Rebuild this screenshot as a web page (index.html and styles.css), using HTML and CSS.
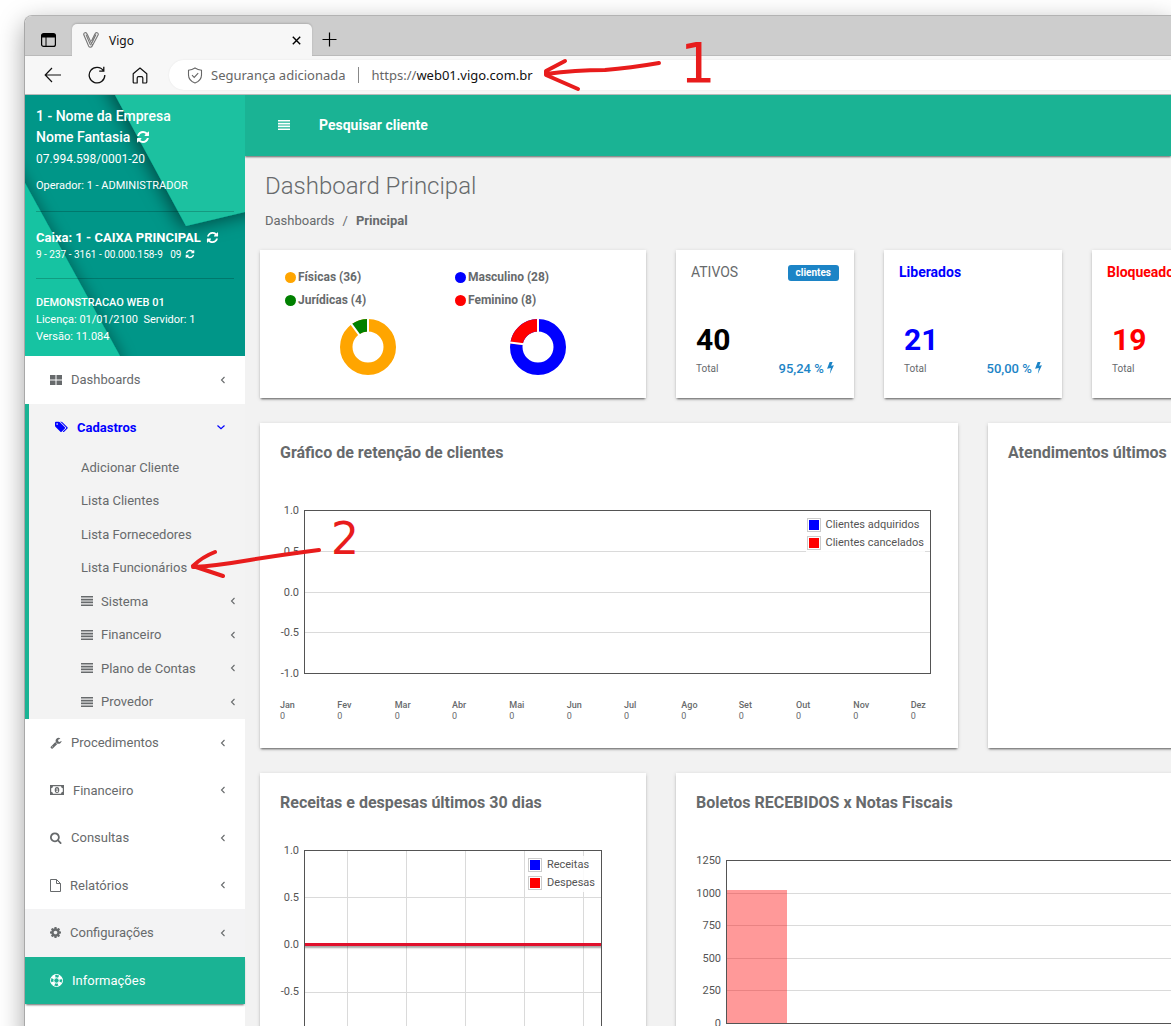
FILE: index.html
```
<!DOCTYPE html>
<html lang="pt-BR">
<head>
    <meta charset="UTF-8">
    <meta name="viewport" content="width=device-width, initial-scale=1.0">
    <title>Vigo</title>
    <link rel="stylesheet" href="styles.css">
</head>
<body>
    <!-- Ícones reutilizados -->
    <svg class="sprite" aria-hidden="true">
        <symbol id="i-refresh" viewBox="0 0 1792 1792"><path d="M1639 1056q0 5-1 7-64 268-268 434.500t-478 166.500q-146 0-282.500-55t-243.500-157l-129 129q-19 19-45 19t-45-19-19-45v-448q0-26 19-45t45-19h448q26 0 45 19t19 45-19 45l-137 137q71 66 161 102t187 36q134 0 250-65t186-179q11-17 53-117 8-23 30-23h192q13 0 22.500 9.500t9.500 22.500zm25-800v448q0 26-19 45t-45 19h-448q-26 0-45-19t-19-45 19-45l138-138q-148-137-349-137-134 0-250 65t-186 179q-11 17-53 117-8 23-30 23h-199q-13 0-22.500-9.500t-9.500-22.500v-7q65-268 270-434.500t480-166.500q146 0 284 55.500t245 156.500l130-129q19-19 45-19t45 19 19 45z"/></symbol>
        <symbol id="i-left" viewBox="0 0 8 10"><path d="M5.500 2L2.500 5l3 3" fill="none" stroke="currentColor" stroke-width="1.100"/></symbol>
        <symbol id="i-down" viewBox="0 0 8 10"><path d="M.5 3.500L4 6.800l3.500-3.300" fill="none" stroke="currentColor" stroke-width="1.200"/></symbol>
        <symbol id="i-bars" viewBox="0 0 12 10"><path d="M0 0h12v1.600H0zM0 2.800h12v1.600H0zM0 5.600h12v1.600H0zM0 8.400h12v1.600H0z"/></symbol>
        <symbol id="i-bolt" viewBox="0 0 8 14"><path d="M3 0h3.500L4.800 4.500 8 3.900 3.200 14l1.200-7L0 8z"/></symbol>
    </svg>

    <div class="window">
        <div class="tab-strip">
            <button class="chrome-button strip-button" aria-label="Guias verticais">
                <svg width="15" height="14" viewBox="0 0 15 14"><rect x=".6" y=".6" width="13.800" height="12.800" rx="2" fill="none" stroke="#000" stroke-width="1.200"/><path d="M1 1h13v3.500H1z"/><path d="M5 4v9" stroke="#000"/></svg>
            </button>
            <div class="tab">
                <svg width="16" height="16" viewBox="0 0 16 16" fill="none" stroke="#777" stroke-width="1.100"><path d="M.8 2.800C.3.600 3.200-.2 4 1.800l5.200 11c.4 2.600-2.600 3.200-3.600 1.200zM3 2.600l4.600 10.700M15.200 2.800c.5-2.200-2.300-3-3.200-1L8.500 9M15.200 2.800L9.200 14c-.6 1-1.500 1.400-2.400 1.200M13 2.600L9 10.800"/></svg>
                <span class="tab-title">Vigo</span>
                <button class="chrome-button" aria-label="Fechar guia">
                    <svg width="9" height="9" viewBox="0 0 9 9"><path d="M.8.800l7.400 7.400M8.200.800L.8 8.200" stroke="#000" stroke-width="1.400"/></svg>
                </button>
            </div>
            <button class="chrome-button new-tab" aria-label="Nova guia">
                <svg width="15" height="15" viewBox="0 0 15 15"><path d="M7.500.500v14M.5 7.500h14" stroke="#000" stroke-width="1.200"/></svg>
            </button>
        </div>

        <div class="toolbar">
            <button class="chrome-button" aria-label="Voltar">
                <svg width="18" height="16" viewBox="0 0 18 16"><path d="M17 8H1.500M8 1L1.200 8 8 15" fill="none" stroke="#111" stroke-width="1.200"/></svg>
            </button>
            <button class="chrome-button" aria-label="Atualizar">
                <svg width="18" height="18" viewBox="0 0 18 18"><path d="M15.500 4.800A7.800 7.800 0 1 0 16.800 9M15.800.800v4.400h-4.600" fill="none" stroke="#111" stroke-width="1.300"/></svg>
            </button>
            <button class="chrome-button" aria-label="Início">
                <svg width="16" height="17" viewBox="0 0 16 17"><path d="M1.200 6.800L8 1l6.800 5.800v8.200q0 1-1 1h-3v-5q0-1.300-1.300-1.300h-3Q5.200 9.700 5.200 11v5h-3q-1 0-1-1z" fill="none" stroke="#111" stroke-width="1.200" stroke-linejoin="round"/></svg>
            </button>
            <div class="address-bar">
                <svg width="16" height="17" viewBox="0 0 16 17" fill="none" stroke="#666" stroke-width="1.100"><path d="M8 1q3 2 6.500 2.200V8q0 5.500-6.500 8Q1.500 13.500 1.500 8V3.200Q5 3 8 1z"/><path d="M5 8.200l2.200 2.200 4-4.200"/></svg>
                <span class="security">Segurança adicionada</span>
                <span class="separator"></span>
                <label class="scheme" for="url">https://</label>
                <input class="url" id="url" type="text" value="web01.vigo.com.br">
            </div>
        </div>

        <div class="page">
            <nav class="sidebar">
                <div class="profile">
                    <svg class="profile-bg" viewBox="0 0 220 261" preserveAspectRatio="none" aria-hidden="true">
                        <defs>
                            <filter id="fold" x="-30%" y="-30%" width="160%" height="160%">
                                <feDropShadow dx="-3" dy="3" stdDeviation="9" flood-opacity=".5"/>
                            </filter>
                            <filter id="fold-soft" x="-50%" y="-30%" width="200%" height="160%">
                                <feDropShadow dx="3" dy="0" stdDeviation="7" flood-opacity=".3"/>
                            </filter>
                        </defs>
                        <path d="M0 88l95 173v40H-20V52z" fill="#14c3a2" filter="url(#fold-soft)"/>
                        <path d="M90 0l71 131 80-19V-20H79z" fill="#1ac1a0" filter="url(#fold)"/>
                    </svg>
                    <div class="profile-info">
                        <strong class="company">1 - Nome da Empresa<br>Nome Fantasia <svg class="refresh refresh-lg"><use href="#i-refresh"/></svg></strong>
                        <span class="cnpj">07.994.598/0001-20</span>
                        <span class="operator">Operador: 1 - ADMINISTRADOR</span>
                        <hr>
                        <strong class="cashier">Caixa: 1 - CAIXA PRINCIPAL <svg class="refresh"><use href="#i-refresh"/></svg></strong>
                        <span class="account">9 - 237 - 3161 - 00.000.158-9 &nbsp; 09 <svg class="refresh refresh-sm"><use href="#i-refresh"/></svg></span>
                        <hr>
                        <span class="license"><b>DEMONSTRACAO WEB 01</b><br>Licença: 01/01/2100&nbsp; Servidor: 1<br>Versão: 11.084</span>
                    </div>
                </div>

                <ul class="menu">
                    <li class="menu-item">
                        <a href="#">
                            <svg width="12" height="12" viewBox="0 0 12 12"><path d="M0 1h5.500v4.500H0zM6.500 1H12v4.500H6.500zM0 6.500h5.500V11H0zM6.500 6.500H12V11H6.500z"/></svg>
                            <span>Dashboards</span><svg class="arrow"><use href="#i-left"/></svg>
                        </a>
                    </li>
                    <li class="menu-item active">
                        <a href="#">
                            <svg width="14" height="12" viewBox="0 0 2048 1792"><path d="M576 448q0-53-37.500-90.500t-90.500-37.500-90.500 37.500-37.500 90.500 37.500 90.500 90.500 37.500 90.500-37.500 37.500-90.500zm1067 576q0 53-37 90l-491 492q-39 37-91 37-53 0-90-37l-715-716q-38-37-64.500-101t-26.500-117v-416q0-52 38-90t90-38h416q53 0 117 26.500t102 64.500l715 714q37 39 37 91zm384 0q0 53-37 90l-491 492q-39 37-91 37-36 0-59-14t-53-45l470-470q37-37 37-90 0-52-37-91l-715-714q-38-38-102-64.500t-117-26.500h224q53 0 117 26.500t102 64.500l715 714q37 39 37 91z"/></svg>
                            <span>Cadastros</span><svg class="arrow"><use href="#i-down"/></svg>
                        </a>
                        <ul class="submenu">
                            <li><a href="#">Adicionar Cliente</a></li>
                            <li><a href="#">Lista Clientes</a></li>
                            <li><a href="#">Lista Fornecedores</a></li>
                            <li><a href="#">Lista Funcionários</a></li>
                            <li><a href="#"><svg class="bars"><use href="#i-bars"/></svg>Sistema<svg class="arrow"><use href="#i-left"/></svg></a></li>
                            <li><a href="#"><svg class="bars"><use href="#i-bars"/></svg>Financeiro<svg class="arrow"><use href="#i-left"/></svg></a></li>
                            <li><a href="#"><svg class="bars"><use href="#i-bars"/></svg>Plano de Contas<svg class="arrow"><use href="#i-left"/></svg></a></li>
                            <li><a href="#"><svg class="bars"><use href="#i-bars"/></svg>Provedor<svg class="arrow"><use href="#i-left"/></svg></a></li>
                        </ul>
                    </li>
                    <li class="menu-item">
                        <a href="#">
                            <svg width="12" height="12" viewBox="0 0 1792 1792"><path d="M448 1472q0-26-19-45t-45-19-45 19-19 45 19 45 45 19 45-19 19-45zm644-420l-682 682q-37 37-90 37-52 0-91-37l-106-108q-38-36-38-90 0-53 38-91l681-681q39 98 114.500 173.500t173.500 114.500zm634-435q0 39-23 106-47 134-164.500 217.500t-258.500 83.500q-185 0-316.500-131.500t-131.500-316.500 131.500-316.500 316.500-131.500q58 0 121.500 16.500t107.500 46.500q16 11 16 28t-16 28l-293 169v224l193 107q5-3 79-48.500t135.500-81 70.500-35.500q15 0 23.500 10t8.500 25z"/></svg>
                            <span>Procedimentos</span><svg class="arrow"><use href="#i-left"/></svg>
                        </a>
                    </li>
                    <li class="menu-item">
                        <a href="#">
                            <svg width="14" height="10" viewBox="0 0 14 10"><path fill-rule="evenodd" d="M0 0h14v10H0zM3 1.200Q2.800 3 1.200 3.200v3.600Q2.800 7 3 8.800h8q.2-1.800 1.800-2V3.200Q11.200 3 11 1.200zM7 2a2.300 3 0 1 1 0 6 2.300 3 0 1 1 0-6zm-.8 1.400v.8h.5v2h-.6V7h2v-.8h-.5V3.400z"/></svg>
                            <span>Financeiro</span><svg class="arrow"><use href="#i-left"/></svg>
                        </a>
                    </li>
                    <li class="menu-item">
                        <a href="#">
                            <svg width="12" height="12" viewBox="64 64 1728 1728"><path d="M1216 832q0-185-131.500-316.500t-316.500-131.500-316.500 131.500-131.500 316.500 131.500 316.500 316.500 131.500 316.500-131.500 131.500-316.500zm512 832q0 52-38 90t-90 38q-54 0-90-38l-343-342q-179 124-399 124-143 0-273.500-55.500t-225-150-150-225-55.500-273.500 55.500-273.500 150-225 225-150 273.500-55.500 273.500 55.500 225 150 150 225 55.500 273.500q0 220-124 399l343 343q37 37 37 90z"/></svg>
                            <span>Consultas</span><svg class="arrow"><use href="#i-left"/></svg>
                        </a>
                    </li>
                    <li class="menu-item">
                        <a href="#">
                            <svg width="11" height="13" viewBox="0 0 11 13"><path d="M.5.500h6l4 4v8H.5zM6.500.500v4h4" fill="none" stroke="currentColor"/></svg>
                            <span>Relatórios</span><svg class="arrow"><use href="#i-left"/></svg>
                        </a>
                    </li>
                    <li class="menu-item special">
                        <a href="#">
                            <svg width="11" height="11" viewBox="128 128 1536 1536"><path d="M1152 896q0-106-75-181t-181-75-181 75-75 181 75 181 181 75 181-75 75-181zm512-109v222q0 12-8 23t-20 13l-185 28q-19 54-39 91 35 50 107 138 10 12 10 25t-9 23q-27 37-99 108t-94 71q-12 0-26-9l-138-108q-44 23-91 38-16 136-29 186-7 28-36 28h-222q-14 0-24.500-8.500t-11.500-21.500l-28-184q-49-16-90-37l-141 107q-10 9-25 9-14 0-25-11-126-114-165-168-7-10-7-23 0-12 8-23 15-21 51-66.500t54-70.500q-27-50-41-99l-183-27q-13-2-21-12.500t-8-23.500v-222q0-12 8-23t19-13l186-28q14-46 39-92-40-57-107-138-10-12-10-24 0-10 9-23 26-36 98.500-107.500t94.500-71.500q13 0 26 10l138 107q44-23 91-38 16-136 29-186 7-28 36-28h222q14 0 24.500 8.500t11.500 21.500l28 184q49 16 90 37l142-107q9-9 24-9 13 0 25 10 129 119 165 170 7 8 7 22 0 12-8 23-15 21-51 66.500t-54 70.500q26 50 41 98l183 28q13 2 21 12.500t8 23.500z"/></svg>
                            <span>Configurações</span><svg class="arrow"><use href="#i-left"/></svg>
                        </a>
                    </li>
                    <li class="menu-item info">
                        <a href="#">
                            <svg width="13" height="13" viewBox="0 0 13 13" fill="none" stroke="currentColor"><circle cx="6.500" cy="6.500" r="6"/><circle cx="6.500" cy="6.500" r="2.700"/><circle cx="6.500" cy="6.500" r="4.400" stroke-width="3" stroke-dasharray="3.450 3.450" stroke-dashoffset="-1.700"/></svg>
                            <span>Informações</span>
                        </a>
                    </li>
                </ul>
            </nav>

            <main class="content">
                <header class="topbar">
                    <button class="menu-toggle" aria-label="Alternar menu"><svg class="bars"><use href="#i-bars"/></svg></button>
                    <input class="search" type="text" placeholder="Pesquisar cliente" aria-label="Pesquisar cliente">
                </header>

                <div class="heading">
                    <h1>Dashboard Principal</h1>
                    <div class="breadcrumb"><a href="#">Dashboards</a><span>/</span><strong>Principal</strong></div>
                </div>

                <div class="cards">
                    <section class="card span-4 people">
                        <div>
                            <p class="dot-row"><i class="dot orange"></i>Físicas (36)</p>
                            <p class="dot-row"><i class="dot green"></i>Jurídicas (4)</p>
                            <svg class="donut" viewBox="-28 -28 56 56" fill="none" stroke-width="12.500">
                                <circle r="21.750" stroke="orange"/>
                                <circle r="21.750" stroke="green" pathLength="100" stroke-dasharray="10 90" transform="rotate(-126)"/>
                                <path d="M0-14v-15M-8.200-11.300l-9-12.400" stroke="#fff" stroke-width="2"/>
                            </svg>
                        </div>
                        <div>
                            <p class="dot-row"><i class="dot blue"></i>Masculino (28)</p>
                            <p class="dot-row"><i class="dot red"></i>Feminino (8)</p>
                            <svg class="donut" viewBox="-28 -28 56 56" fill="none" stroke-width="12.500">
                                <circle r="21.750" stroke="blue"/>
                                <circle r="21.750" stroke="red" pathLength="100" stroke-dasharray="23 77" transform="rotate(-172.800)"/>
                                <path d="M0-14v-15M-14-2.800l-15-1.900" stroke="#fff" stroke-width="2"/>
                            </svg>
                        </div>
                    </section>

                    <section class="card span-2 stat">
                        <div class="stat-head"><h2>ATIVOS</h2><span class="badge">clientes</span></div>
                        <div class="stat-body">
                            <strong class="number">40</strong>
                            <div class="stat-foot"><small>Total</small><span class="percent">95,24 % <svg class="bolt"><use href="#i-bolt"/></svg></span></div>
                        </div>
                    </section>
                    <section class="card span-2 stat stat-blue">
                        <div class="stat-head"><h2>Liberados</h2></div>
                        <div class="stat-body">
                            <strong class="number">21</strong>
                            <div class="stat-foot"><small>Total</small><span class="percent">50,00 % <svg class="bolt"><use href="#i-bolt"/></svg></span></div>
                        </div>
                    </section>
                    <section class="card span-2 stat stat-red">
                        <div class="stat-head"><h2>Bloqueados</h2></div>
                        <div class="stat-body">
                            <strong class="number">19</strong>
                            <div class="stat-foot"><small>Total</small></div>
                        </div>
                    </section>
                </div>

                <div class="cards">
                    <section class="card span-7 panel">
                        <h2>Gráfico de retenção de clientes</h2>
                        <div class="chart">
                            <div class="axis"><span>1.0</span><span>0.5</span><span>0.0</span><span>-0.5</span><span>-1.0</span></div>
                            <div class="plot">
                                <i></i><i></i><i></i><i></i>
                                <div class="legend">
                                    <span><b class="blue"></b>Clientes adquiridos</span>
                                    <span><b class="red"></b>Clientes cancelados</span>
                                </div>
                            </div>
                        </div>
                        <div class="months">
                            <span><b>Jan</b>0</span><span><b>Fev</b>0</span><span><b>Mar</b>0</span><span><b>Abr</b>0</span><span><b>Mai</b>0</span><span><b>Jun</b>0</span><span><b>Jul</b>0</span><span><b>Ago</b>0</span><span><b>Set</b>0</span><span><b>Out</b>0</span><span><b>Nov</b>0</span><span><b>Dez</b>0</span>
                        </div>
                    </section>
                    <section class="card span-5 panel">
                        <h2>Atendimentos últimos</h2>
                    </section>
                </div>

                <div class="cards">
                    <section class="card span-4 panel">
                        <h2>Receitas e despesas últimos 30 dias</h2>
                        <div class="chart chart-tall">
                            <div class="axis"><span>1.0</span><span>0.5</span><span>0.0</span><span>-0.5</span><span>-1.0</span></div>
                            <div class="plot plot-days">
                                <i></i><i></i><i class="zero-line"></i><i></i>
                                <div class="legend">
                                    <span><b class="blue"></b>Receitas</span>
                                    <span><b class="red"></b>Despesas</span>
                                </div>
                            </div>
                        </div>
                    </section>
                    <section class="card span-8 panel">
                        <h2>Boletos RECEBIDOS x Notas Fiscais</h2>
                        <div class="chart chart-wide">
                            <div class="axis"><span>1250</span><span>1000</span><span>750</span><span>500</span><span>250</span><span>0</span></div>
                            <div class="plot">
                                <i></i><i></i><i></i><i></i><i></i>
                                <div class="bar" style="height: 82%"></div>
                            </div>
                        </div>
                    </section>
                </div>
            </main>
        </div>
    </div>

    <!-- Marcações do passo a passo -->
    <svg class="notes" width="760" height="620" viewBox="0 0 760 620">
        <path d="M659 63Q630 68 605 70Q575 70 546 74M565 61L546 71V75L578 89"/>
        <path d="M319 550Q280 555 250 560Q215 566 193 567M215 552Q202 557 193 566L223 576"/>
        <text class="note-1" x="680" y="82">1</text>
        <text class="note-2" x="331" y="554">2</text>
    </svg>
</body>
</html>
```
FILE: styles.css
```
/* Geral */
* {
    margin: 0;
    padding: 0;
    box-sizing: border-box;
}

body {
    height: 100vh;
    overflow: hidden;
    background: #fff;
    font-family: Roboto, sans-serif;
    font-size: 13px;
    color: #676a6c;
}

a {
    color: inherit;
    text-decoration: none;
}

ul {
    list-style: none;
}

svg {
    flex-shrink: 0;
}

svg:not([fill]) {
    fill: currentColor;
}

button {
    border: none;
    background: transparent;
    cursor: pointer;
}

input {
    border: none;
    outline: none;
    background: transparent;
    min-width: 0;
}

.sprite {
    position: absolute;
    width: 0;
    height: 0;
}

.blue { background: #00f; }
.red { background: #f00; }
.orange { background: orange; }
.green { background: green; }

/* Janela do navegador */
.window {
    display: flex;
    flex-direction: column;
    margin: 15px 0 0 24px;
    height: 100%;
    border-top: 1px solid #b3b3b3;
    border-left: 1px solid #a8a8a8;
    border-radius: 8px 0 0 0;
    overflow: hidden;
    box-shadow: 0 8px 26px rgba(0, 0, 0, 0.36);
    font-family: "Noto Sans", sans-serif;
}

.chrome-button {
    display: flex;
    align-items: center;
    justify-content: center;
}

.tab-strip {
    display: flex;
    align-items: flex-end;
    height: 40px;
    flex-shrink: 0;
    background: #cdcdcd;
    border-bottom: 1px solid #bababa;
}

.strip-button {
    width: 47px;
    height: 31px;
}

.tab {
    display: flex;
    align-items: center;
    width: 240px;
    height: 32px;
    margin-bottom: -1px;
    padding: 0 11px;
    gap: 10px;
    background: #f7f7f7;
    border-radius: 5px 5px 0 0;
    box-shadow: 0 -1px 2px rgba(0, 0, 0, 0.15);
    clip-path: inset(-4px -4px 0 -4px);
    font-size: 12px;
    color: #111;
}

.tab-title {
    flex: 1;
}

.new-tab {
    width: 35px;
    height: 32px;
}

.toolbar {
    display: flex;
    align-items: center;
    gap: 26px;
    height: 39px;
    flex-shrink: 0;
    padding-left: 19px;
    background: #f7f7f7;
    border-bottom: 1px solid #bababa;
}

.address-bar {
    display: flex;
    flex: 1;
    align-items: center;
    height: 30px;
    margin-left: -5px;
    padding-left: 18px;
    background: #fff;
    border-radius: 15px 0 0 15px;
    font-size: 13px;
    color: #666;
    box-shadow: 0 0 2px rgba(0, 0, 0, 0.08);
}

.security {
    margin-left: 8px;
}

.separator {
    width: 1px;
    height: 16px;
    margin: 0 13px 0 12px;
    background: #888;
}

.url {
    flex: 1;
    font: inherit;
    color: #111;
}

/* Página */
.page {
    display: flex;
    flex: 1;
    min-height: 0;
    background: #f2f2f2;
    font-family: Roboto, sans-serif;
}

.sidebar {
    width: 220px;
    flex-shrink: 0;
    background: #fff;
}

/* Dados da empresa */
.profile {
    position: relative;
    height: 261px;
    overflow: hidden;
    background: #009688;
    color: #fff;
}

.profile-bg {
    position: absolute;
    inset: 0;
    width: 100%;
    height: 100%;
}

.profile-info {
    position: relative;
    display: flex;
    flex-direction: column;
    padding: 11px;
}

.profile-info hr {
    border: none;
    border-top: 1px solid rgba(0, 0, 0, 0.2);
}

.company {
    font-size: 14px;
    line-height: 21px;
    font-weight: 500;
}

.cnpj {
    font-size: 12px;
    line-height: 22px;
}

.operator {
    margin: 6px 0 15px;
    font-size: 11px;
    line-height: 20px;
}

.cashier {
    margin-top: 17px;
    font-size: 13px;
    line-height: 18px;
}

.account {
    margin-bottom: 15px;
    font-size: 10px;
    line-height: 16px;
}

.license {
    margin-top: 15px;
    font-size: 11px;
    line-height: 17px;
}

.license b {
    font-weight: 500;
}

.refresh {
    width: 13px;
    height: 13px;
    margin-left: 2px;
    vertical-align: -2px;
}

.refresh-lg {
    width: 14px;
    height: 14px;
}

.refresh-sm {
    width: 10px;
    height: 10px;
    margin-left: 1px;
    vertical-align: -1px;
}

/* Menu lateral */
.menu {
    display: grid;
    min-height: 648px;
}

.menu-item > a {
    display: flex;
    align-items: center;
    min-height: 47px;
    padding: 0 18px 0 25px;
    gap: 9px;
}

.menu-item span {
    flex: 1;
}

.arrow {
    width: 8px;
    height: 10px;
}

.menu-item.active {
    background: #f3f3f3;
    border-left: 4px solid #1ab394;
}

.menu-item.active > a {
    padding-right: 20px;
    color: #00f;
    font-weight: 700;
}

.menu-item.special {
    background: #f3f3f4;
}

.menu-item.info {
    background: #1ab394;
    color: #fff;
    box-shadow: 0 2px 2px -1px rgba(0, 0, 0, 0.6);
}

.submenu {
    display: grid;
    min-height: 268px;
}

.submenu a {
    display: flex;
    align-items: center;
    height: 100%;
    padding: 0 8px 0 52px;
}

.submenu .arrow {
    margin-left: auto;
}

.bars {
    width: 12px;
    height: 10px;
}

.submenu .bars {
    margin-right: 8px;
}

/* Barra superior */
.content {
    flex: 1;
    min-width: 0;
    overflow: hidden;
}

.topbar {
    display: flex;
    align-items: center;
    gap: 29px;
    height: 61px;
    padding: 0 0 2px 33px;
    background: #1ab394;
    box-shadow: 0 1px 2px rgba(0, 0, 0, 0.6);
}

.menu-toggle {
    display: flex;
    color: #fff;
}

.search {
    flex: 1;
    font: 700 14px Roboto, sans-serif;
    color: #fff;
}

.search::placeholder {
    color: #fff;
    opacity: 1;
}

.heading {
    padding: 15px 20px 19px;
}

.heading h1 {
    font-size: 24px;
    line-height: 30px;
    font-weight: 300;
}

.breadcrumb {
    display: flex;
    gap: 8px;
    margin-top: 10px;
    line-height: 20px;
}

.breadcrumb strong {
    font-weight: 700;
}

/* Cartões */
.cards {
    display: grid;
    grid-template-columns: repeat(12, 1fr);
    gap: 30px;
    min-width: 1218px;
    margin: 0 15px 25px;
}

.card {
    background: #fff;
    box-shadow: 0 2px 2px -1px rgba(0, 0, 0, 0.55), 0 1px 4px rgba(0, 0, 0, 0.16);
}

.span-2 { grid-column: span 2; }
.span-4 { grid-column: span 4; }
.span-5 { grid-column: span 5; }
.span-7 { grid-column: span 7; }
.span-8 { grid-column: span 8; }

.people {
    display: grid;
    grid-template-columns: 1fr 1fr;
    min-height: 148px;
    padding: 16px 23px;
}

.dot-row {
    display: flex;
    align-items: center;
    gap: 2px;
    padding-left: 2px;
    font-size: 12px;
    line-height: 23px;
    font-weight: 700;
}

.dot {
    width: 11px;
    height: 11px;
    border-radius: 50%;
}

.donut {
    display: block;
    width: 56px;
    height: 56px;
    margin: 7px auto 0;
}

.stat {
    padding: 15px;
}

.stat-head {
    display: flex;
    justify-content: space-between;
    height: 57px;
}

.stat-head h2 {
    font-size: 14px;
    line-height: 15px;
    font-weight: 400;
}

.badge {
    height: 16px;
    padding: 0 8px;
    background: #1c84c6;
    border-radius: 3px;
    color: #fff;
    font-size: 10px;
    line-height: 16px;
    font-weight: 700;
}

.stat-body {
    padding: 0 5px;
}

.number {
    display: block;
    font-size: 30px;
    line-height: 36px;
    font-weight: 700;
    color: #000;
}

.stat-foot {
    display: flex;
    align-items: center;
    justify-content: space-between;
    line-height: 22px;
}

.stat-foot small {
    font-size: 10px;
}

.percent {
    color: #1c84c6;
    font-weight: 500;
}

.bolt {
    width: 7px;
    height: 12px;
    vertical-align: -1px;
}

.stat-blue h2,
.stat-blue .number {
    color: #00f;
    font-weight: 700;
}

.stat-red h2,
.stat-red .number {
    color: #f00;
    font-weight: 700;
}

/* Gráficos */
.panel {
    min-height: 325px;
    padding: 20px;
}

.panel h2 {
    font-size: 16px;
    line-height: 20px;
    font-weight: 700;
}

.chart {
    display: grid;
    grid-template-columns: 19px 1fr;
    gap: 5px;
    height: 164px;
    margin: 47px 7px 0 0;
    font-size: 11px;
    color: #545454;
}

.chart-tall {
    height: 189px;
    margin: 37px 24px 0 0;
}

.chart-wide {
    grid-template-columns: 25px 1fr;
}

.axis {
    display: flex;
    flex-direction: column;
    justify-content: space-between;
    margin: -5px 0 -6px;
    text-align: right;
    line-height: 12px;
    white-space: nowrap;
}

.plot {
    position: relative;
    display: flex;
    flex-direction: column;
    border: 1px solid #545454;
}

.plot > i {
    flex: 1;
}

.plot > i + i {
    border-top: 1px solid #dadada;
}

.plot-days {
    background: linear-gradient(to right, #dadada 1px, transparent 1px) 42px 0 / 59px 100%;
}

.plot > i.zero-line {
    border-top: 3px solid #e0102c;
    box-shadow: inset 0 3px 2px -1px rgba(0, 0, 0, 0.35);
}

.legend {
    position: absolute;
    top: 5px;
    right: 5px;
    padding: 0 1px;
    background: rgba(255, 255, 255, 0.85);
}

.legend span {
    display: flex;
    align-items: center;
    gap: 5px;
    line-height: 18px;
}

.legend b {
    width: 14px;
    height: 14px;
    border: 1px solid #ccc;
    padding: 1px;
    background-clip: content-box;
}

.bar {
    position: absolute;
    left: 0;
    bottom: 0;
    width: 60px;
    background: rgba(255, 0, 0, 0.4);
}

.months {
    display: grid;
    grid-template-columns: repeat(12, 1fr);
    margin: 26px -30px 0 0;
    font-size: 9px;
    line-height: 11px;
}

.months b {
    display: block;
    font-weight: 500;
}

/* Marcações */
.notes {
    position: absolute;
    top: 0;
    left: 0;
    pointer-events: none;
}

.notes path {
    fill: none;
    stroke: #e81c1c;
    stroke-width: 4;
    stroke-linecap: round;
    stroke-linejoin: round;
}

.notes text {
    fill: #e81c1c;
    font-family: "DejaVu Sans", sans-serif;
}

.note-1 {
    font-size: 56px;
}

.note-2 {
    font-size: 44px;
}
```
